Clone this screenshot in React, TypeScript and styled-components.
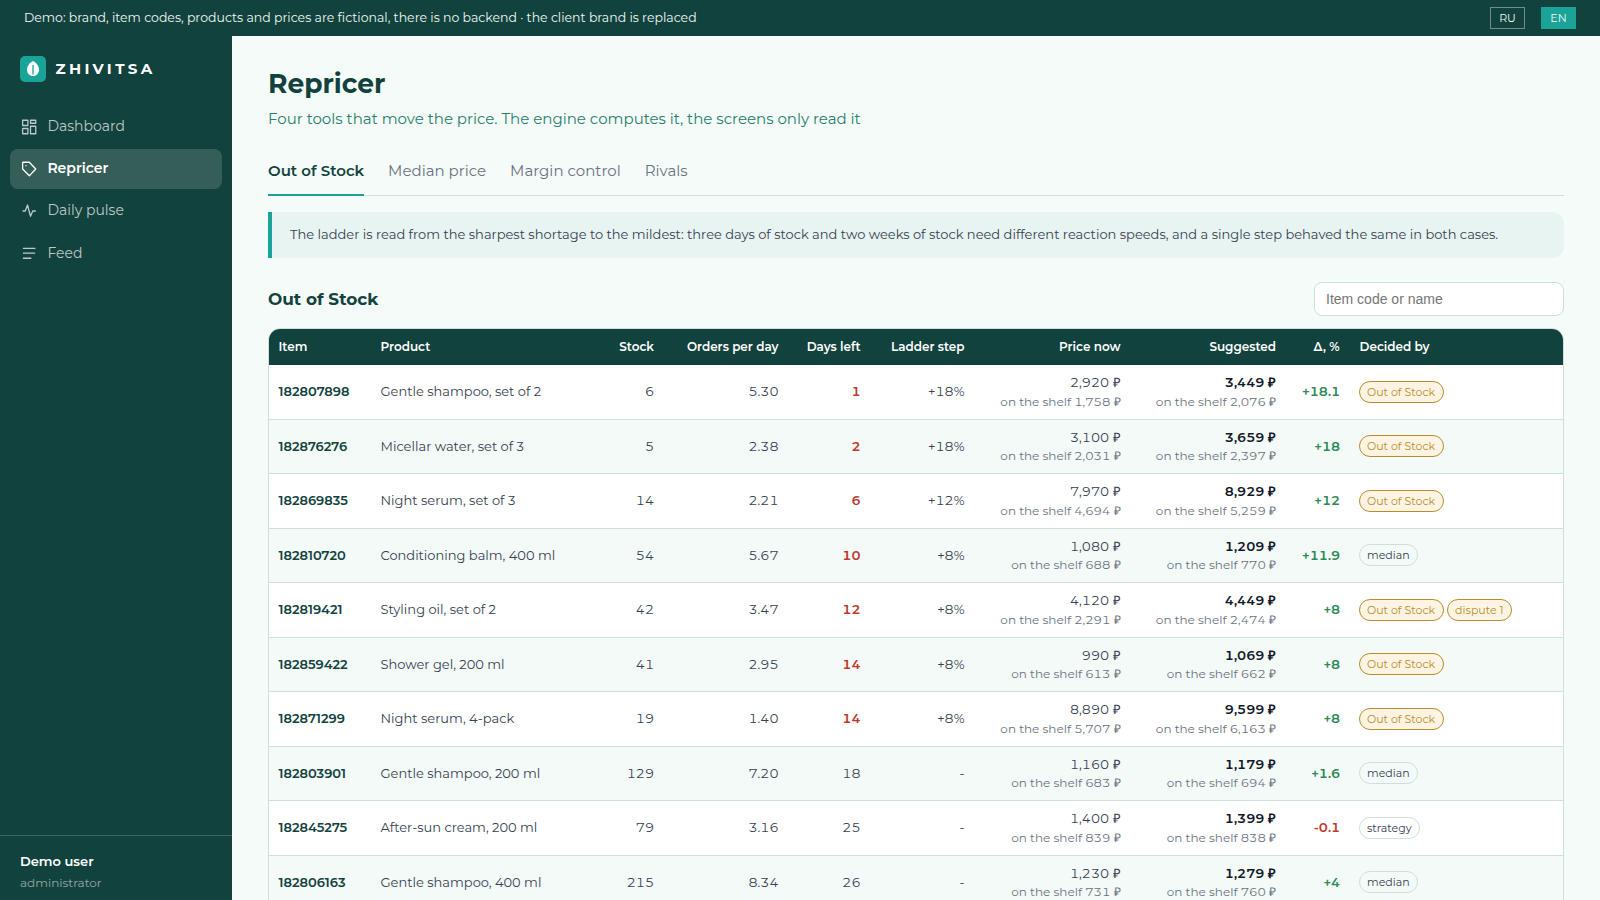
import React from 'react';
import styled, { createGlobalStyle, css } from 'styled-components';

const color = {
  deep: '#12423d',
  teal: '#1aa498',
  page: '#f5fbf9',
  stripe: '#f3faf8',
  line: '#cfe0dc',
  ink: '#111827',
  body: '#374151',
  muted: '#6b7280',
  gold: '#bb8d2a',
  red: '#c0392b',
  green: '#2e8b57',
};

const GlobalStyle = createGlobalStyle`
  *, *::before, *::after { box-sizing: border-box; }
  html, body { margin: 0; height: 100%; }
  body {
    font-family: Montserrat, Inter, sans-serif;
    font-size: 14px;
    line-height: 1.5;
    color: ${color.body};
    background: ${color.page};
    overflow: hidden;
  }
`;

const Shell = styled.div`
  display: flex;
  flex-direction: column;
  height: 100vh;
  overflow: hidden;
`;

const DemoBar = styled.header`
  display: flex;
  align-items: center;
  justify-content: space-between;
  flex: none;
  height: 36px;
  padding: 0 24px;
  background: ${color.deep};
  color: #eef8f5;
  font-size: 12.49px;
`;

const Languages = styled.div`
  display: flex;
  gap: 16px;
`;

const LanguageButton = styled.button<{ $active?: boolean }>`
  width: 35px;
  height: 22px;
  padding: 0;
  border: 1px solid ${p => (p.$active ? color.teal : 'rgba(255, 255, 255, 0.4)')};
  background: ${p => (p.$active ? color.teal : 'transparent')};
  color: #eef8f5;
  font: inherit;
  font-size: 11px;
`;

const Body = styled.div`
  display: flex;
  flex: 1;
  min-height: 0;
`;

const Sidebar = styled.aside`
  display: flex;
  flex-direction: column;
  flex: none;
  width: 232px;
  background: ${color.deep};
`;

const Brand = styled.div`
  display: flex;
  align-items: center;
  gap: 9.5px;
  padding: 20px 20px 24.6px;
  color: #fff;
  font-size: 15px;
  font-weight: 700;
  line-height: 26px;
  letter-spacing: 0.225em;
`;

const Nav = styled.nav`
  display: flex;
  flex-direction: column;
  gap: 2.15px;
  flex: 1;
  padding: 0 10px;
`;

const NavItem = styled.a<{ $active?: boolean }>`
  display: flex;
  align-items: center;
  gap: 9.4px;
  height: 40px;
  padding: 0 10px;
  border-radius: 8px;
  font-size: 14px;
  color: rgba(255, 255, 255, 0.72);
  ${p => p.$active && css`
    background: rgba(255, 255, 255, 0.15);
    color: #fff;
    font-weight: 600;
  `}
`;

const Account = styled.div`
  height: 65px;
  padding: 15px 20px 0;
  border-top: 1px solid rgba(255, 255, 255, 0.2);
`;

const AccountName = styled.div`
  color: #fff;
  font-size: 13px;
  font-weight: 600;
  line-height: 20px;
`;

const AccountRole = styled.div`
  margin-top: 3px;
  color: rgba(255, 255, 255, 0.55);
  font-size: 12px;
  line-height: 18px;
`;

const Main = styled.main`
  flex: 1;
  min-width: 0;
  padding: 28px 36px 0;
  overflow: hidden;
`;

const Title = styled.h1`
  margin: 0;
  color: ${color.deep};
  font-size: 26.5px;
  font-weight: 700;
  line-height: 40px;
`;

const Subtitle = styled.p`
  margin: 4px 0 0;
  color: #25806c;
  font-size: 15px;
  line-height: 22px;
`;

const Tabs = styled.div`
  display: flex;
  gap: 24px;
  height: 50px;
  margin-top: 16px;
  border-bottom: 1px solid ${color.line};
`;

const Tab = styled.a<{ $active?: boolean }>`
  height: 50px;
  padding-top: 14px;
  border-bottom: 2px solid ${p => (p.$active ? color.teal : 'transparent')};
  color: ${p => (p.$active ? color.deep : color.muted)};
  font-size: 15px;
  font-weight: ${p => (p.$active ? 600 : 400)};
  line-height: 22px;
`;

const Note = styled.p`
  margin: 16px 0 0;
  padding: 12px 18px 14px;
  border-left: 4px solid ${color.teal};
  border-radius: 0 12px 12px 0;
  background: #e7f4f1;
  font-size: 13px;
  line-height: 20px;
`;

const SectionHead = styled.div`
  display: flex;
  align-items: center;
  justify-content: space-between;
  margin: 24px 0 12px;
`;

const SectionTitle = styled.h2`
  margin: 0;
  padding-top: 2px;
  color: ${color.deep};
  font-size: 16.9px;
  font-weight: 700;
`;

const Search = styled.input`
  width: 250px;
  height: 34px;
  padding: 0 11px;
  border: 1px solid ${color.line};
  border-radius: 8px;
  background: #fff;
  font-family: 'Liberation Sans', sans-serif;
  font-size: 14px;
  &::placeholder { color: #757575; opacity: 1; }
`;

const TableFrame = styled.div`
  border: 1px solid ${color.line};
  border-radius: 12px;
  overflow: hidden;
  background: #fff;
`;

const Table = styled.table`
  width: 100%;
  table-layout: fixed;
  border-collapse: separate;
  border-spacing: 0;
  font-size: 13px;
`;

const HeadCell = styled.th<{ $right?: boolean }>`
  height: 36px;
  padding: 0 10px;
  background: ${color.deep};
  color: #fff;
  font-size: 12px;
  font-weight: 600;
  text-align: ${p => (p.$right ? 'right' : 'left')};
  white-space: nowrap;
  &:first-child { padding-left: 9.5px; }
`;

const Row = styled.tr`
  &:nth-child(even) { background: ${color.stripe}; }
`;

const Cell = styled.td`
  padding: 8px 10px;
  border-bottom: 1px solid ${color.line};
  vertical-align: middle;
  white-space: nowrap;
`;

const NumberCell = styled(Cell)`
  text-align: right;
  font-variant-numeric: tabular-nums;
`;

const CodeCell = styled(Cell)`
  padding-left: 9.5px;
  color: ${color.deep};
  font-weight: 600;
`;

const DaysCell = styled(NumberCell)<{ $short: boolean }>`
  ${p => p.$short && css`
    color: ${color.red};
    font-weight: 600;
  `}
`;

const DeltaCell = styled(NumberCell)<{ $down: boolean }>`
  padding-right: 9.3px;
  color: ${p => (p.$down ? color.red : color.green)};
  font-weight: 600;
`;

const DecisionCell = styled(Cell)`
  padding-left: 9px;
`;

const Suggested = styled.div`
  color: ${color.ink};
  font-weight: 600;
`;

const Shelf = styled.div`
  color: ${color.muted};
  font-size: 12px;
`;

const Currency = styled.span`
  font-family: 'Liberation Sans', sans-serif;
  line-height: 1;
`;

const Badges = styled.div`
  display: flex;
  gap: 3px;
`;

const Badge = styled.span<{ $gold?: boolean }>`
  height: 22px;
  padding: 0 7.5px;
  border: 1px solid ${p => (p.$gold ? color.gold : color.line)};
  border-radius: 11px;
  background: ${p => (p.$gold ? '#fdf4e3' : 'transparent')};
  color: ${p => (p.$gold ? color.gold : color.body)};
  font-size: 11px;
  line-height: 20px;
`;

const IconFrame = styled.svg`
  flex: none;
  width: 18px;
  height: 18px;
  fill: none;
  stroke: currentColor;
  stroke-width: 1.7;
  stroke-linecap: round;
  stroke-linejoin: round;
`;

const Mark = styled.svg`
  flex: none;
  width: 26px;
  height: 26px;
`;

const Logo = () => (
  <Mark viewBox="0 0 26 26">
    <rect width="26" height="26" rx="5" fill={color.teal} />
    <path d="M13 5c3.400 1.700 6 5.200 6 8.700 0 3.700-2.600 6.300-6 6.300s-6-2.600-6-6.300C7 10.200 9.600 6.700 13 5z" fill="#fff" />
    <path d="M13 9.500v8.500" stroke={color.teal} strokeWidth="1.300" strokeLinecap="round" />
  </Mark>
);

const DashboardIcon = () => (
  <IconFrame viewBox="0 0 24 24">
    <rect x="3.500" y="3" width="7" height="7" />
    <rect x="14" y="3" width="7" height="4" />
    <rect x="3.500" y="14" width="7" height="7" />
    <rect x="14" y="11" width="7" height="10" />
  </IconFrame>
);

const TagIcon = () => (
  <IconFrame viewBox="0 0 24 24">
    <path d="M3.500 4v8l9 9 8.500-9-8.500-9h-8a1 1 0 0 0-1 1z" />
    <path d="M8 7.500h.01" />
  </IconFrame>
);

const PulseIcon = () => (
  <IconFrame viewBox="0 0 24 24">
    <path d="M4 12h3l3-8 4 15 3-7h3.500" />
  </IconFrame>
);

const FeedIcon = () => (
  <IconFrame viewBox="0 0 24 24">
    <path d="M4.500 5.700h15.500M4.500 12.300h15M4.500 19h10" />
  </IconFrame>
);

const navItems = [
  { label: 'Dashboard', Icon: DashboardIcon },
  { label: 'Repricer', Icon: TagIcon, active: true },
  { label: 'Daily pulse', Icon: PulseIcon },
  { label: 'Feed', Icon: FeedIcon },
];

const columns = [
  { label: 'Item', width: 101.5 },
  { label: 'Product', width: 230.5 },
  { label: 'Stock', width: 63, right: true },
  { label: 'Orders per day', width: 124.5, right: true },
  { label: 'Days left', width: 82, right: true },
  { label: 'Ladder step', width: 104, right: true },
  { label: 'Price now', width: 156, right: true },
  { label: 'Suggested', width: 155.5, right: true },
  { label: 'Δ, %', width: 63.5, right: true },
  { label: 'Decided by' },
];

type Item = [
  code: string, name: string, stock: number, orders: string, days: number, step: string,
  price: string, shelf: string, next: string, nextShelf: string, delta: string, decided: string, dispute?: string,
];

const items: Item[] = [
  ['182807898', 'Gentle shampoo, set of 2', 6, '5.30', 1, '+18%', '2,920', '1,758', '3,449', '2,076', '+18.1', 'Out of Stock'],
  ['182876276', 'Micellar water, set of 3', 5, '2.38', 2, '+18%', '3,100', '2,031', '3,659', '2,397', '+18', 'Out of Stock'],
  ['182869835', 'Night serum, set of 3', 14, '2.21', 6, '+12%', '7,970', '4,694', '8,929', '5,259', '+12', 'Out of Stock'],
  ['182810720', 'Conditioning balm, 400 ml', 54, '5.67', 10, '+8%', '1,080', '688', '1,209', '770', '+11.9', 'median'],
  ['182819421', 'Styling oil, set of 2', 42, '3.47', 12, '+8%', '4,120', '2,291', '4,449', '2,474', '+8', 'Out of Stock', 'dispute 1'],
  ['182859422', 'Shower gel, 200 ml', 41, '2.95', 14, '+8%', '990', '613', '1,069', '662', '+8', 'Out of Stock'],
  ['182871299', 'Night serum, 4-pack', 19, '1.40', 14, '+8%', '8,890', '5,707', '9,599', '6,163', '+8', 'Out of Stock'],
  ['182803901', 'Gentle shampoo, 200 ml', 129, '7.20', 18, '-', '1,160', '683', '1,179', '694', '+1.6', 'median'],
  ['182845275', 'After-sun cream, 200 ml', 79, '3.16', 25, '-', '1,400', '839', '1,399', '838', '-0.1', 'strategy'],
  ['182806163', 'Gentle shampoo, 400 ml', 215, '8.34', 26, '-', '1,230', '731', '1,279', '760', '+4', 'median'],
];

const Rubles = ({ amount }: { amount: string }) => <>{amount} <Currency>₽</Currency></>;

export default function App() {
  return (
    <Shell>
      <GlobalStyle />
      <DemoBar>
        <span>Demo: brand, item codes, products and prices are fictional, there is no backend · the client brand is replaced</span>
        <Languages>
          <LanguageButton>RU</LanguageButton>
          <LanguageButton $active>EN</LanguageButton>
        </Languages>
      </DemoBar>
      <Body>
        <Sidebar>
          <Brand><Logo />ZHIVITSA</Brand>
          <Nav>
            {navItems.map(({ label, Icon, active }) => (
              <NavItem key={label} $active={active}><Icon />{label}</NavItem>
            ))}
          </Nav>
          <Account>
            <AccountName>Demo user</AccountName>
            <AccountRole>administrator</AccountRole>
          </Account>
        </Sidebar>
        <Main>
          <Title>Repricer</Title>
          <Subtitle>Four tools that move the price. The engine computes it, the screens only read it</Subtitle>
          <Tabs>
            <Tab $active>Out of Stock</Tab>
            <Tab>Median price</Tab>
            <Tab>Margin control</Tab>
            <Tab>Rivals</Tab>
          </Tabs>
          <Note>
            The ladder is read from the sharpest shortage to the mildest: three days of stock and two weeks of stock need
            different reaction speeds, and a single step behaved the same in both cases.
          </Note>
          <SectionHead>
            <SectionTitle>Out of Stock</SectionTitle>
            <Search placeholder="Item code or name" />
          </SectionHead>
          <TableFrame>
            <Table>
              <colgroup>
                {columns.map(c => <col key={c.label} width={c.width} />)}
              </colgroup>
              <thead>
                <tr>{columns.map(c => <HeadCell key={c.label} $right={c.right}>{c.label}</HeadCell>)}</tr>
              </thead>
              <tbody>
                {items.map(([code, name, stock, orders, days, step, price, shelf, next, nextShelf, delta, decided, dispute]) => (
                  <Row key={code}>
                    <CodeCell>{code}</CodeCell>
                    <Cell>{name}</Cell>
                    <NumberCell>{stock}</NumberCell>
                    <NumberCell>{orders}</NumberCell>
                    <DaysCell $short={days <= 14}>{days}</DaysCell>
                    <NumberCell>{step}</NumberCell>
                    <NumberCell><div><Rubles amount={price} /></div><Shelf>on the shelf <Rubles amount={shelf} /></Shelf></NumberCell>
                    <NumberCell><Suggested><Rubles amount={next} /></Suggested><Shelf>on the shelf <Rubles amount={nextShelf} /></Shelf></NumberCell>
                    <DeltaCell $down={delta.startsWith('-')}>{delta}</DeltaCell>
                    <DecisionCell>
                      <Badges>
                        <Badge $gold={decided === 'Out of Stock'}>{decided}</Badge>
                        {dispute && <Badge $gold>{dispute}</Badge>}
                      </Badges>
                    </DecisionCell>
                  </Row>
                ))}
              </tbody>
            </Table>
          </TableFrame>
        </Main>
      </Body>
    </Shell>
  );
}
